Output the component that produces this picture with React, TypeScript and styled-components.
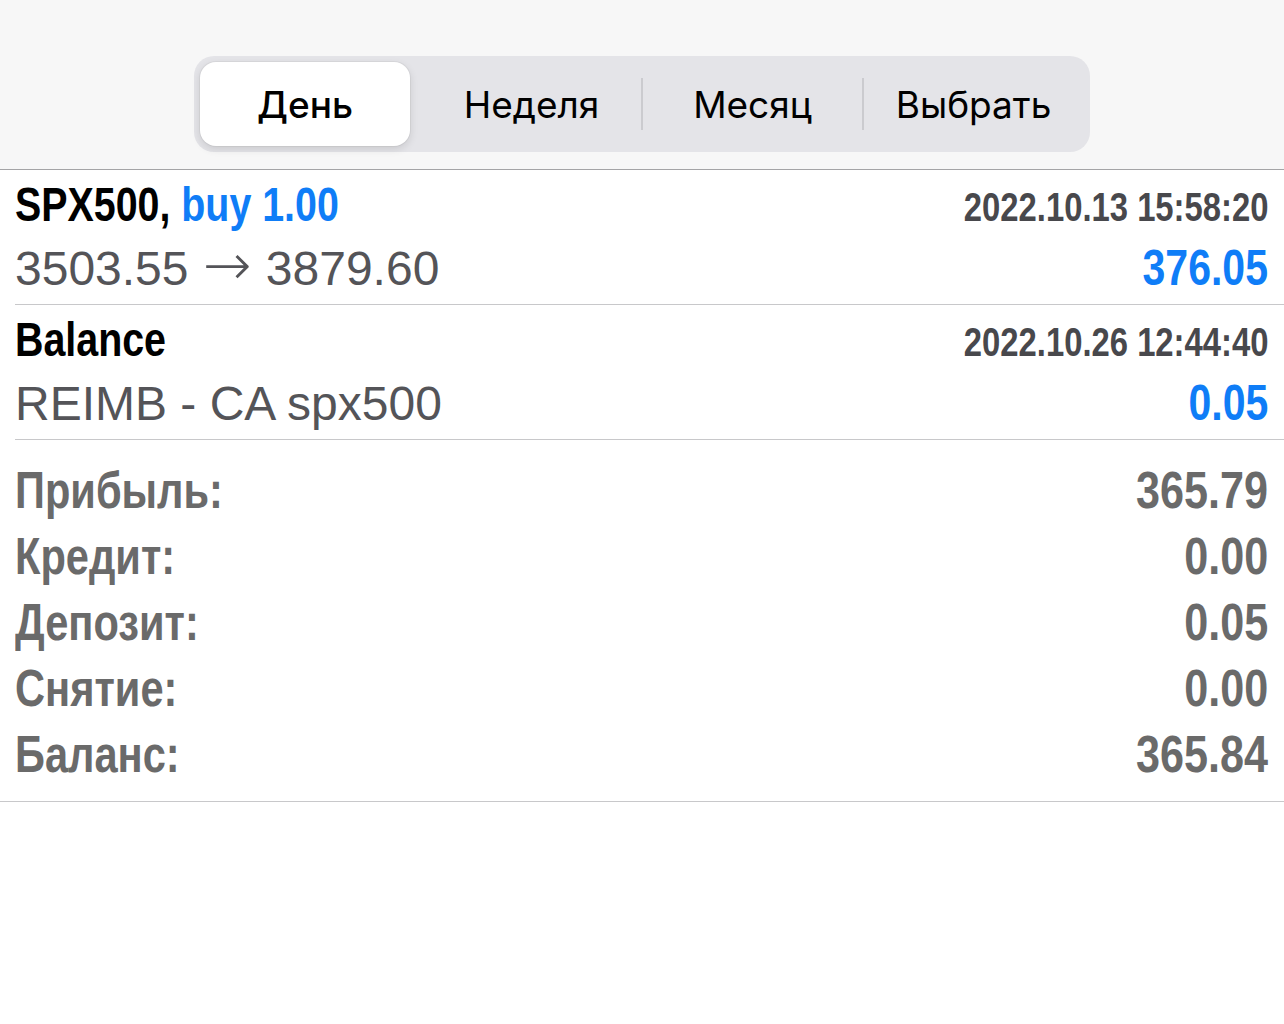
import React, { FC, useState } from "react";
import styled, { createGlobalStyle } from "styled-components";

const GlobalStyle = createGlobalStyle`
  html, body {
    margin: 0;
    padding: 0;
    background: #ffffff;
  }
  body {
    font-family: "Liberation Sans", Arial, sans-serif;
  }
`;

const Header = styled.div`
  background: #f7f7f7;
  height: 170px;
  border-bottom: 1px solid #a4a4a6;
  display: flex;
  justify-content: center;
  align-items: flex-start;
  padding-top: 56px;
  box-sizing: border-box;
`;

const Segmented = styled.div`
  width: 896px;
  height: 96px;
  box-sizing: border-box;
  padding: 6px;
  border-radius: 20px;
  background: #e4e4e8;
  display: grid;
  grid-template-columns: repeat(4, 1fr);
`;

const Segment = styled.button<{ $active: boolean; $divider: boolean }>`
  position: relative;
  border: none;
  margin: ${(p) => (p.$active ? "0 11px 0 0" : "0")};
  padding: 0;
  cursor: pointer;
  font-family: Inter, "Noto Sans", sans-serif;
  font-size: 37px;
  font-weight: ${(p) => (p.$active ? 500 : 400)};
  color: #000;
  border-radius: 16px;
  background: ${(p) => (p.$active ? "#ffffff" : "transparent")};
  box-shadow: ${(p) =>
    p.$active ? "0 3px 8px rgba(0,0,0,0.12), 0 0 0 1px rgba(0,0,0,0.04)" : "none"};

  &::before {
    content: "";
    display: ${(p) => (p.$divider ? "block" : "none")};
    position: absolute;
    left: -1px;
    top: 16px;
    bottom: 16px;
    width: 2px;
    background: #cbcbcf;
  }
`;

const Row = styled.div`
  margin-left: 15px;
  padding: 5px 16px 3px 0;
  border-bottom: 1px solid #c8c8ca;
`;

const Line = styled.div<{ $h: number }>`
  display: flex;
  justify-content: space-between;
  align-items: baseline;
  height: ${(p) => p.$h}px;
  line-height: ${(p) => p.$h}px;
  white-space: nowrap;
`;

// condensed bold face: Liberation Sans Bold narrowed the way Arial Narrow is
const Narrow = styled.span<{
  $size: number;
  $color: string;
  $end?: boolean;
  $scale?: number;
}>`
  display: inline-block;
  font-family: "Liberation Sans", Arial, sans-serif;
  font-weight: 700;
  font-size: ${(p) => p.$size}px;
  color: ${(p) => p.$color};
  transform: scaleX(${(p) => p.$scale ?? 0.82});
  transform-origin: ${(p) => (p.$end ? "right" : "left")} center;
`;

const Blue = styled.span`
  color: #0f7df7;
`;

const Detail = styled.span`
  font-family: "Liberation Sans", Arial, sans-serif;
  font-size: 48px;
  color: #545458;
`;

const Arrow = styled.span`
  font-family: "DejaVu Sans", sans-serif;
  font-weight: 300;
  font-size: 58px;
  line-height: 0;
  margin: 0 1px;
`;

const Summary = styled.div`
  padding: 17px 16px 14px 15px;
  border-bottom: 1px solid #c8c8ca;
`;

const SumLine = styled.div`
  display: flex;
  justify-content: space-between;
  align-items: baseline;
  height: 66px;
  line-height: 66px;
`;

type Deal = {
  title: string;
  extra?: string;
  time: string;
  from: string;
  to?: string;
  amount: string;
};

const deals: Deal[] = [
  {
    title: "SPX500,",
    extra: "buy 1.00",
    time: "2022.10.13 15:58:20",
    from: "3503.55",
    to: "3879.60",
    amount: "376.05",
  },
  {
    title: "Balance",
    time: "2022.10.26 12:44:40",
    from: "REIMB - CA spx500",
    amount: "0.05",
  },
];

const totals = [
  ["Прибыль:", "365.79"],
  ["Кредит:", "0.00"],
  ["Депозит:", "0.05"],
  ["Снятие:", "0.00"],
  ["Баланс:", "365.84"],
];

const tabs = ["День", "Неделя", "Месяц", "Выбрать"];

const App: FC = () => {
  const [tab, setTab] = useState(0);

  return (
    <>
      <GlobalStyle />
      <Header>
        <Segmented>
          {tabs.map((name, i) => (
            <Segment
              key={name}
              $active={tab === i}
              $divider={i > 0 && tab !== i && tab !== i - 1}
              onClick={() => setTab(i)}
            >
              {name}
            </Segment>
          ))}
        </Segmented>
      </Header>

      {deals.map((d) => (
        <Row key={d.time}>
          <Line $h={60}>
            <Narrow $size={48} $color="#000">
              {d.title}
              {d.extra && <Blue> {d.extra}</Blue>}
            </Narrow>
            <Narrow $size={40} $color="#48484c" $end>
              {d.time}
            </Narrow>
          </Line>
          <Line $h={66}>
            <Detail>
              {d.from}
              {d.to && (
                <>
                  {" "}
                  <Arrow>{"\u2192"}</Arrow> {d.to}
                </>
              )}
            </Detail>
            <Narrow $size={50} $color="#0f7df7" $end>
              {d.amount}
            </Narrow>
          </Line>
        </Row>
      ))}

      <Summary>
        {totals.map(([label, value]) => (
          <SumLine key={label}>
            <Narrow $size={52} $color="#6a6a6a" $scale={0.8}>
              {label}
            </Narrow>
            <Narrow $size={52} $color="#6a6a6a" $end $scale={0.83}>
              {value}
            </Narrow>
          </SumLine>
        ))}
      </Summary>
    </>
  );
};

export default App;
